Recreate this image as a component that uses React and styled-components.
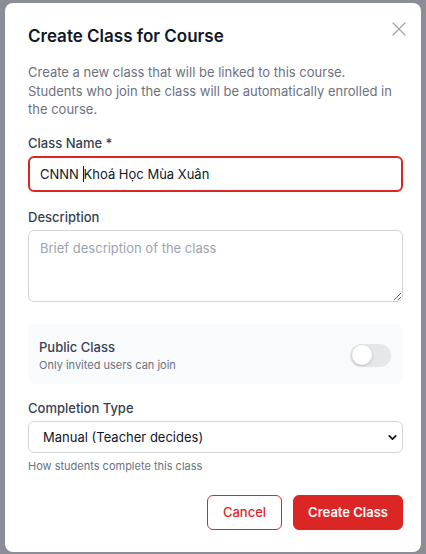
import React from 'react';
import styled, { createGlobalStyle } from 'styled-components';
import { X, ChevronDown } from 'lucide-react';

const GlobalStyle = createGlobalStyle`
	html, body {
		margin: 0;
		padding: 0;
		background: #8b8e96;
		font-family: Inter, "Noto Sans", "Liberation Sans", sans-serif;
	}
	* { box-sizing: border-box; }
`;

const Overlay = styled.div`
	min-height: 554px;
	display: flex;
	justify-content: center;
	align-items: flex-start;
	padding: 3px 5px 2px;
`;

const Modal = styled.div`
	position: relative;
	width: 416px;
	background: #fff;
	border-radius: 8px;
	padding: 22px 18px 22px 23px;
	display: flex;
	flex-direction: column;
`;

const CloseButton = styled.button`
	position: absolute;
	top: 14px;
	right: 10px;
	border: none;
	background: none;
	padding: 0;
	color: #a1a6b0;
	display: flex;
	cursor: pointer;
`;

const Title = styled.h2`
	margin: 0;
	font-size: 17px;
	font-weight: 600;
	color: #111827;
	line-height: 22px;
`;

const Intro = styled.p`
	margin: 16px 0 0;
	font-size: 13px;
	line-height: 18.5px;
	color: #6b7280;
`;

const Field = styled.div`
	display: flex;
	flex-direction: column;
	margin-top: ${p => p.$top || 18}px;
`;

const Label = styled.label`
	font-size: 13px;
	font-weight: 500;
	color: #374151;
	line-height: 18px;
	margin-bottom: 4px;
`;

const TextBox = styled.div`
	height: 36px;
	border: 2px solid #dc2626;
	border-radius: 6px;
	padding: 0 10px;
	display: flex;
	align-items: center;
	font-size: 13px;
	color: #111827;
	white-space: pre;
`;

const Caret = styled.span`
	display: inline-block;
	width: 1px;
	height: 16px;
	background: #111827;
`;

const TextArea = styled.textarea`
	height: 72px;
	border: 1px solid #d1d5db;
	border-radius: 6px;
	padding: 9px 11px;
	font-family: inherit;
	font-size: 13px;
	color: #111827;
	resize: vertical;
	outline: none;

	&::placeholder {
		color: #9ca3af;
	}
`;

const ToggleCard = styled.div`
	margin-top: 22px;
	background: #f9fafb;
	border-radius: 8px;
	padding: 14px 12px 11px 11px;
	display: flex;
	align-items: center;
	justify-content: space-between;
`;

const ToggleText = styled.div`
	display: flex;
	flex-direction: column;
`;

const ToggleTitle = styled.span`
	font-size: 13px;
	font-weight: 500;
	color: #374151;
	line-height: 18px;
`;

const ToggleHint = styled.span`
	font-size: 11px;
	color: #6b7280;
	line-height: 16px;
	margin-top: 1px;
`;

const Switch = styled.div`
	width: 41px;
	height: 23px;
	border-radius: 12px;
	background: #e5e7eb;
	padding: 2px;
	display: flex;
	align-items: center;
`;

const Knob = styled.div`
	width: 20px;
	height: 20px;
	border-radius: 50%;
	background: #fff;
	box-shadow: 0 1px 3px rgba(0, 0, 0, 0.2);
`;

const SelectWrap = styled.div`
	position: relative;
`;

const Select = styled.select`
	width: 100%;
	height: 32px;
	appearance: none;
	border: 1px solid #d1d5db;
	border-radius: 6px;
	padding: 0 30px 0 14px;
	font-family: inherit;
	font-size: 13px;
	color: #111827;
	background: #fff;
	outline: none;
`;

const SelectIcon = styled.span`
	position: absolute;
	right: 4px;
	top: 10px;
	display: flex;
	color: #111;
	pointer-events: none;
`;

const Help = styled.span`
	font-size: 11px;
	color: #6b7280;
	margin-top: 6px;
	line-height: 14px;
`;

const Footer = styled.div`
	display: flex;
	justify-content: flex-end;
	gap: 11px;
	margin-top: 22px;
`;

const Button = styled.button`
	height: 35px;
	border-radius: 6px;
	font-family: inherit;
	font-size: 13px;
	font-weight: ${p => (p.$primary ? 600 : 500)};
	padding: 0 ${p => (p.$primary ? 14 : 15)}px;
	cursor: pointer;
	border: 1px solid #dc2626;
	background: ${p => (p.$primary ? '#dc2626' : '#fff')};
	color: ${p => (p.$primary ? '#fff' : '#dc2626')};
`;

export default function App() {
	return (
		<>
			<GlobalStyle />
			<Overlay>
				<Modal>
					<CloseButton aria-label="Close">
						<X size={24} strokeWidth={1.2} />
					</CloseButton>
					<Title>Create Class for Course</Title>
					<Intro>
						Create a new class that will be linked to this course. Students who join the class will be automatically enrolled in the course.
					</Intro>

					<Field $top={15}>
						<Label>Class Name *</Label>
						<TextBox>
							CNNN <Caret />Khoá Học Mùa Xuân
						</TextBox>
					</Field>

					<Field $top={16}>
						<Label>Description</Label>
						<TextArea placeholder="Brief description of the class" />
					</Field>

					<ToggleCard>
						<ToggleText>
							<ToggleTitle>Public Class</ToggleTitle>
							<ToggleHint>Only invited users can join</ToggleHint>
						</ToggleText>
						<Switch>
							<Knob />
						</Switch>
					</ToggleCard>

					<Field $top={15}>
						<Label>Completion Type</Label>
						<SelectWrap>
							<Select defaultValue="manual">
								<option value="manual">Manual (Teacher decides)</option>
							</Select>
							<SelectIcon>
								<ChevronDown size={13} strokeWidth={3} />
							</SelectIcon>
						</SelectWrap>
						<Help>How students complete this class</Help>
					</Field>

					<Footer>
						<Button>Cancel</Button>
						<Button $primary>Create Class</Button>
					</Footer>
				</Modal>
			</Overlay>
		</>
	);
}
